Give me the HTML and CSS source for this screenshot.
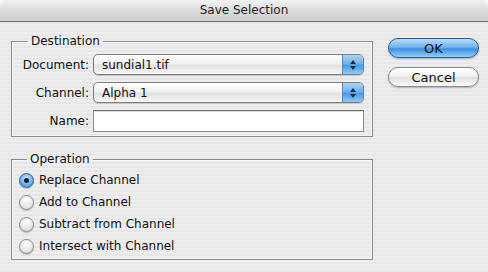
FILE: index.html
```html
<!DOCTYPE html>
<html lang="en">
<head>
  <meta charset="UTF-8" />
  <title>Save Selection</title>
  <link rel="stylesheet" href="styles.css">
</head>
<body>
  <div class="window">
    <div class="titlebar">Save Selection</div>
    <div class="content">
      <div class="groups">
        <fieldset class="group dest">
          <legend>Destination</legend>
          <label>Document:</label>
          <div class="popup"><span>sundial1.tif</span><i class="arrows"></i></div>
          <label>Channel:</label>
          <div class="popup"><span>Alpha 1</span><i class="arrows"></i></div>
          <label for="name">Name:</label>
          <input type="text" id="name" class="field" />
        </fieldset>
        <fieldset class="group oper">
          <legend>Operation</legend>
          <div class="radio-row"><span class="radio on"></span>Replace Channel</div>
          <div class="radio-row"><span class="radio"></span>Add to Channel</div>
          <div class="radio-row"><span class="radio"></span>Subtract from Channel</div>
          <div class="radio-row"><span class="radio"></span>Intersect with Channel</div>
        </fieldset>
      </div>
      <div class="buttons">
        <button class="btn default">OK</button>
        <button class="btn">Cancel</button>
      </div>
    </div>
  </div>
</body>
</html>
```

FILE: styles.css
```css
body {
  margin: 0;
  font-family: "DejaVu Sans", sans-serif;
  font-size: 12px;
  color: #111;
  background: #fff;
}
.window {
  width: 488px;
  height: 272px;
  overflow: hidden;
  border-radius: 6px 6px 0 0;
  background: repeating-linear-gradient(#eeeeee 0 2px, #e7e7e7 2px 4px);
}
.titlebar {
  height: 21px;
  line-height: 21px;
  text-align: center;
  color: #222;
  background: linear-gradient(#f2f2f2, #dcdcdc 50%, #cdcdcd);
  border-bottom: 1px solid #6e6e6e;
}
.content {
  display: flex;
  padding-left: 11px;
}
.groups {
  width: 362px;
}
.group {
  margin: 0;
  border: 1px solid #8c8c8c;
  box-shadow: inset 0 0 0 1px rgba(255, 255, 255, 0.6);
}
.group legend {
  margin-left: 8px;
  padding: 0 3px;
  line-height: 14px;
}
.dest {
  margin-top: 12px;
  padding: 6px 8px 4px 8px;
  display: grid;
  grid-template-columns: 69px 1fr;
  column-gap: 4px;
  row-gap: 7px;
  align-items: center;
}
.dest label {
  text-align: right;
}
.popup {
  height: 19px;
  display: flex;
  align-items: center;
  border: 1px solid #7d7d7d;
  border-radius: 5px;
  background: linear-gradient(#ffffff, #f0f0f0 45%, #e2e2e2 55%, #f7f7f7);
  box-shadow: 0 1px 1px rgba(0, 0, 0, 0.15);
  overflow: hidden;
}
.popup span {
  flex: 1;
  padding-left: 8px;
}
.arrows {
  width: 20px;
  height: 100%;
  border-left: 1px solid #5a86b8;
  background: linear-gradient(#a9d3f5, #6fb2ec 45%, #4a98e2 55%, #8fcaf7);
  position: relative;
}
.arrows::before,
.arrows::after {
  content: "";
  position: absolute;
  left: 7px;
  border-left: 3px solid transparent;
  border-right: 3px solid transparent;
}
.arrows::before {
  top: 5px;
  border-bottom: 4px solid #1c2c44;
}
.arrows::after {
  top: 11px;
  border-top: 4px solid #1c2c44;
}
.field {
  height: 22px;
  box-sizing: border-box;
  margin: 0;
  border: 1px solid #8a8a8a;
  border-top-color: #6a6a6a;
  box-shadow: inset 0 1px 1px rgba(0, 0, 0, 0.15);
  background: #fff;
  font: inherit;
}
.oper {
  margin-top: 15px;
  padding: 3px 7px 2px 7px;
}
.radio-row {
  height: 22px;
  display: flex;
  align-items: center;
  gap: 5px;
}
.radio {
  width: 13px;
  height: 13px;
  border-radius: 50%;
  border: 1px solid #8a8a8a;
  background: radial-gradient(circle at 50% 30%, #ffffff, #e6e6e6 60%, #cfcfcf);
  box-shadow: 0 1px 1px rgba(0, 0, 0, 0.2);
  position: relative;
}
.radio.on {
  border-color: #2f5f99;
  background: radial-gradient(circle at 50% 35%, #c8e4fb, #6fb2ec 55%, #2f7cd0);
}
.radio.on::after {
  content: "";
  position: absolute;
  left: 4px;
  top: 4px;
  width: 5px;
  height: 5px;
  border-radius: 50%;
  background: #10203a;
}
.buttons {
  margin-left: 15px;
  margin-top: 16px;
  display: flex;
  flex-direction: column;
  gap: 9px;
}
.btn {
  width: 91px;
  height: 20px;
  padding: 0;
  border: 1px solid #8a8a8a;
  border-radius: 10px;
  font: inherit;
  font-size: 13px;
  color: #111;
  background: linear-gradient(#ffffff, #f2f2f2 45%, #e0e0e0 55%, #fbfbfb);
  box-shadow: 0 1px 2px rgba(0, 0, 0, 0.25);
}
.btn.default {
  border-color: #2e5d92;
  background: linear-gradient(#b9dcf9, #73b5ee 45%, #3f8ee0 55%, #8fd0fb);
}
```
